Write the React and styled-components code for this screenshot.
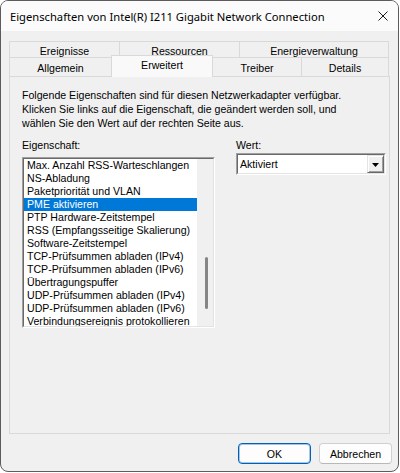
import React from 'react';
import styled, { createGlobalStyle } from 'styled-components';

const GlobalStyle = createGlobalStyle`
  body {
    margin: 0;
    background: #ffffff;
  }
`;

const backTabs = [
  { label: 'Ereignisse', width: 111 },
  { label: 'Ressourcen', width: 121 },
  { label: 'Energieverwaltung', width: 150 },
];

const frontTabs = [
  { label: 'Allgemein', width: 103 },
  { label: 'Erweitert', width: 102, active: true },
  { label: 'Treiber', width: 90 },
  { label: 'Details', width: 88 },
];

const properties = [
  'Max. Anzahl RSS-Warteschlangen',
  'NS-Abladung',
  'Paketpriorität und VLAN',
  'PME aktivieren',
  'PTP Hardware-Zeitstempel',
  'RSS (Empfangsseitige Skalierung)',
  'Software-Zeitstempel',
  'TCP-Prüfsummen abladen (IPv4)',
  'TCP-Prüfsummen abladen (IPv6)',
  'Übertragungspuffer',
  'UDP-Prüfsummen abladen (IPv4)',
  'UDP-Prüfsummen abladen (IPv6)',
  'Verbindungsereignis protokollieren',
];

function App() {
  return (
    <>
      <GlobalStyle />
      <Window>
        <TitleBar>
          <Title>Eigenschaften von Intel(R) I211 Gigabit Network Connection</Title>
          <CloseIcon width="10" height="10" viewBox="0 0 10 10">
            <path d="M0.5 0.5 L9.5 9.5 M9.5 0.5 L0.5 9.5" stroke="#1a1a1a" strokeWidth="1" fill="none" />
          </CloseIcon>
        </TitleBar>
        <Body>
          <TabRow>
            {backTabs.map((t) => (
              <BackTab key={t.label} $w={t.width}>{t.label}</BackTab>
            ))}
          </TabRow>
          <FrontRow>
            {frontTabs.map((t) => (
              <FrontTab key={t.label} $w={t.width} $active={t.active}>{t.label}</FrontTab>
            ))}
          </FrontRow>
          <Panel>
            <Intro>
              Folgende Eigenschaften sind für diesen Netzwerkadapter verfügbar.<br />
              Klicken Sie links auf die Eigenschaft, die geändert werden soll, und<br />
              wählen Sie den Wert auf der rechten Seite aus.
            </Intro>
            <Fields>
              <Column>
                <Label>Eigenschaft:</Label>
                <ListBox>
                  <ListInner>
                    <Items>
                      {properties.map((p) => (
                        <Item key={p} $selected={p === 'PME aktivieren'}>{p}</Item>
                      ))}
                    </Items>
                    <ScrollTrack>
                      <ScrollThumb />
                    </ScrollTrack>
                  </ListInner>
                </ListBox>
              </Column>
              <Column>
                <Label>Wert:</Label>
                <Combo>
                  <ComboInner>
                    <ComboText>Aktiviert</ComboText>
                    <ComboButton>
                      <svg width="7" height="4" viewBox="0 0 7 4">
                        <polygon points="0,0 7,0 3.5,4" fill="#000" />
                      </svg>
                    </ComboButton>
                  </ComboInner>
                </Combo>
              </Column>
            </Fields>
          </Panel>
          <ButtonRow>
            <DialogButton $primary>OK</DialogButton>
            <DialogButton>Abbrechen</DialogButton>
          </ButtonRow>
        </Body>
      </Window>
    </>
  );
}

const Window = styled.div`
  box-sizing: border-box;
  width: 399px;
  height: 472px;
  border: 1px solid #5c5c5c;
  border-radius: 8px;
  overflow: hidden;
  background: #f0f0f0;
  display: flex;
  flex-direction: column;
  font-family: "Liberation Sans", Arial, sans-serif;
  font-size: 10.6px;
  color: #000;
`;

const TitleBar = styled.div`
  height: 30px;
  flex: none;
  display: flex;
  align-items: center;
  justify-content: space-between;
  padding: 0 10px 0 9px;
  background: #fbfbfb;
`;

const Title = styled.span`
  font-family: "Noto Sans", "Open Sans", sans-serif;
  font-size: 11.2px;
  color: #000;
`;

const CloseIcon = styled.svg`
  display: block;
`;

const Body = styled.div`
  flex: 1;
  display: flex;
  flex-direction: column;
  padding: 10px 8px 7px 8px;
  min-height: 0;
`;

const TabRow = styled.div`
  display: flex;
  height: 16px;
`;

const BackTab = styled.div`
  box-sizing: border-box;
  width: ${(p) => p.$w}px;
  height: 16px;
  margin-left: -1px;
  &:first-child { margin-left: 0; }
  border: 1px solid #d9d9d9;
  border-bottom: none;
  background: #f0f0f0;
  display: flex;
  align-items: center;
  justify-content: center;
  padding-top: 2px;
`;

const FrontRow = styled.div`
  display: flex;
  align-items: flex-end;
  height: 19px;
`;

const FrontTab = styled.div`
  box-sizing: border-box;
  width: ${(p) => p.$w}px;
  height: ${(p) => (p.$active ? 22 : 19)}px;
  margin-left: -1px;
  margin-bottom: ${(p) => (p.$active ? -1 : 0)}px;
  &:first-child { margin-left: 0; }
  border: 1px solid #d9d9d9;
  border-bottom: none;
  background: ${(p) => (p.$active ? '#f9f9f9' : '#f0f0f0')};
  position: relative;
  z-index: ${(p) => (p.$active ? 2 : 1)};
  display: flex;
  align-items: center;
  justify-content: center;
  padding-top: ${(p) => (p.$active ? 0 : 1)}px;
  padding-bottom: ${(p) => (p.$active ? 4 : 0)}px;
`;

const Panel = styled.div`
  flex: 1;
  border: 1px solid #d9d9d9;
  padding: 11px 12px;
  display: flex;
  flex-direction: column;
  min-height: 0;
`;

const Intro = styled.div`
  line-height: 14px;
`;

const Fields = styled.div`
  display: grid;
  grid-template-columns: 193px 150px;
  column-gap: 21px;
  margin-top: 8px;
`;

const Column = styled.div`
  display: flex;
  flex-direction: column;
`;

const Label = styled.div`
  line-height: 14px;
  height: 14px;
`;

const ListBox = styled.div`
  box-sizing: border-box;
  margin-top: 5px;
  height: 171px;
  border: 1px solid;
  border-color: #a0a0a0 #ffffff #ffffff #a0a0a0;
  display: flex;
`;

const ListInner = styled.div`
  flex: 1;
  display: flex;
  border: 1px solid;
  border-color: #696969 #e3e3e3 #e3e3e3 #696969;
  background: #ffffff;
  overflow: hidden;
`;

const Items = styled.div`
  flex: 1;
  display: flex;
  flex-direction: column;
`;

const Item = styled.div`
  flex: none;
  height: 13px;
  line-height: 13px;
  padding-left: 3px;
  white-space: nowrap;
  background: ${(p) => (p.$selected ? '#0078d7' : 'transparent')};
  color: ${(p) => (p.$selected ? '#ffffff' : '#000000')};
`;

const ScrollTrack = styled.div`
  width: 16px;
  flex: none;
  background: #f0f0f0;
  display: flex;
  flex-direction: column;
  align-items: center;
  padding-top: 98px;
`;

const ScrollThumb = styled.div`
  width: 3px;
  height: 52px;
  border-radius: 2px;
  background: #858585;
  margin-left: 3px;
`;

const Combo = styled.div`
  box-sizing: border-box;
  margin-top: 1px;
  height: 22px;
  border: 1px solid;
  border-color: #a0a0a0 #ffffff #ffffff #a0a0a0;
  display: flex;
`;

const ComboInner = styled.div`
  flex: 1;
  display: flex;
  border: 1px solid;
  border-color: #696969 #e3e3e3 #e3e3e3 #696969;
  background: #ffffff;
`;

const ComboText = styled.div`
  flex: 1;
  padding-left: 2px;
  display: flex;
  align-items: center;
`;

const ComboButton = styled.div`
  box-sizing: border-box;
  width: 17px;
  display: flex;
  align-items: center;
  justify-content: center;
  background: #f0f0f0;
  border: 1px solid;
  border-color: #e3e3e3 #696969 #696969 #e3e3e3;
  box-shadow: inset 1px 1px 0 #ffffff, inset -1px -1px 0 #a0a0a0;
  padding-top: 1px;
`;

const ButtonRow = styled.div`
  display: flex;
  justify-content: flex-end;
  gap: 8px;
  margin-top: 9px;
  margin-right: -2px;
`;

const DialogButton = styled.button`
  box-sizing: border-box;
  width: 73px;
  height: 21px;
  border-radius: 4px;
  font-family: "Liberation Sans", Arial, sans-serif;
  font-size: 10.6px;
  color: #000;
  background: #fdfdfd;
  border: 1px solid ${(p) => (p.$primary ? '#005fb8' : '#d0d0d0')};
  border-bottom-color: ${(p) => (p.$primary ? '#005fb8' : '#b8b8b8')};
  box-shadow: ${(p) => (p.$primary ? 'inset 0 0 0 1px rgba(0, 95, 184, 0.35)' : 'none')};
  padding: 0;
`;

export default App;
